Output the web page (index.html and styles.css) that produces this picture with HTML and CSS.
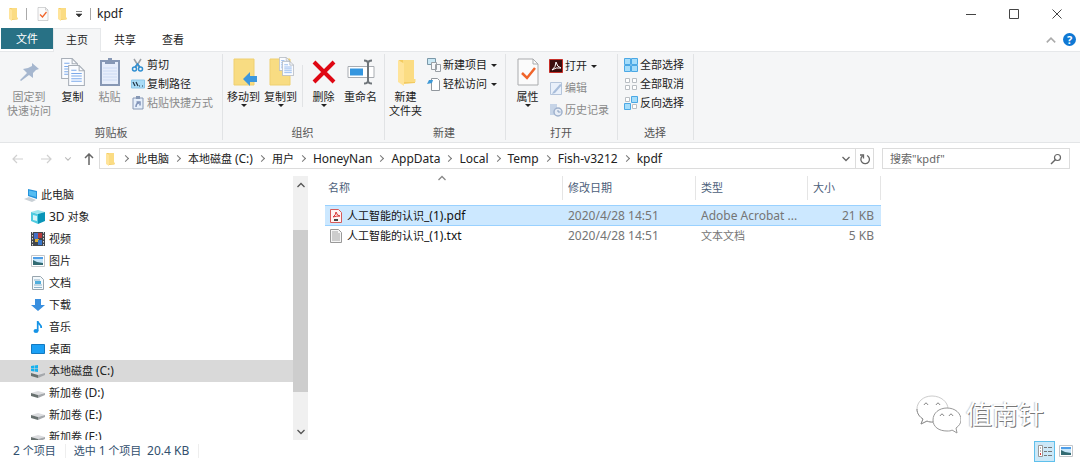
FILE: index.html
```html
<!DOCTYPE html>
<html lang="zh-CN">
<head>
    <meta charset="UTF-8">
    <meta name="viewport" content="width=device-width, initial-scale=1.0">
    <title>kpdf</title>
    <link rel="stylesheet" href="styles.css">
</head>
<body>
    <!-- Shared icons -->
    <svg class="defs" aria-hidden="true">
        <symbol id="folder" viewBox="0 0 20 28">
            <path d="M3 2h14v20h2v3l-12 1z" fill="#f3cb60"/>
            <path d="M7 2h11v19h1.500v3H7z" fill="#fbdc83"/>
            <path d="M2 2l6 3.500V28L2 24z" fill="#ffe49a"/>
        </symbol>
        <symbol id="check-page" viewBox="0 0 22 28">
            <path d="M1 1h15l5 5v21H1z" fill="#fbfbfb" stroke="#a9abad"/>
            <path d="M16 1v5h5" fill="none" stroke="#a9abad"/>
            <path d="M5 15l5 5 8-10" fill="none" stroke="#f0642a" stroke-width="2.500"/>
        </symbol>
        <symbol id="page" viewBox="0 0 16 20">
            <path d="M.5.5h10l5 5v14H.5z" fill="#fafcff" stroke="#a8afb8"/>
            <path d="M10.500.5v5h5" fill="none" stroke="#a8afb8"/>
            <path d="M3 5h5M3 8h10M3 10.500h10M3 13h10M3 15.500h10" stroke="#7ca9ea"/>
        </symbol>
        <symbol id="drive" viewBox="0 0 14 10">
            <path d="M0 5l7-2 7 2-7 2z" fill="#dcdde0"/>
            <path d="M0 5l7 2v3L0 8z" fill="#68716f"/>
            <path d="M7 7l7-2v2l-7 3z" fill="#a5a8ac"/>
        </symbol>
        <symbol id="picture" viewBox="0 0 14 12">
            <path d="M.5.500h13v11H.5z" fill="#fff" stroke="#c3c6ca"/>
            <path d="M2 2h10v8H2z" fill="#c6e6fa"/>
            <path d="M2 2h10v2H2z" fill="#4f9ee8"/>
            <path d="M2 5l4 2 6 1v2H2z" fill="#326b73"/>
        </symbol>
        <symbol id="chevron" viewBox="0 0 10 10">
            <path d="M1.500 3L5 6.500 8.500 3" fill="none" stroke="currentColor" stroke-width="1.300"/>
        </symbol>
    </svg>

    <div class="explorer">
        <header class="titlebar">
            <svg class="title-icon" width="10" height="14"><use href="#folder"/></svg>
            <span class="bar"></span>
            <button class="quick" aria-label="属性"><svg width="12" height="14"><use href="#check-page"/></svg></button>
            <button class="quick" aria-label="新建文件夹"><svg width="10" height="14"><use href="#folder"/></svg></button>
            <button class="quick more" aria-label="自定义快速访问工具栏"><svg width="6" height="7"><path d="M0 .5h6M0 3h6L3 6z" fill="#333" stroke="#333" stroke-width=".6"/></svg></button>
            <span class="bar"></span>
            <span class="title en">kpdf</span>
            <div class="window-buttons">
                <button aria-label="最小化"><svg width="10" height="10"><path d="M0 5.500h10" stroke="#444"/></svg></button>
                <button aria-label="最大化"><svg width="10" height="10"><path d="M.5.500h9v9h-9z" fill="none" stroke="#444"/></svg></button>
                <button aria-label="关闭"><svg width="10" height="10"><path d="M.5.500l9 9M9.500.500l-9 9" stroke="#444"/></svg></button>
            </div>
        </header>

        <nav class="tabs">
            <button class="tab file-tab">文件</button>
            <button class="tab active">主页</button>
            <button class="tab">共享</button>
            <button class="tab">查看</button>
            <div class="tabs-right">
                <button class="collapse" aria-label="折叠功能区"><svg class="up" width="12" height="12"><use href="#chevron"/></svg></button>
                <button class="help" aria-label="帮助">?</button>
            </div>
        </nav>

        <section class="ribbon">
            <div class="group clipboard">
                <div class="tools">
                    <button class="big wide" disabled>
                        <svg width="22" height="30"><path d="M14 6l7 6-3 1-3 3 0 5-4-3-8 6-1-1 7-7-4-4 5-1 4-2z" fill="#a6b7cf"/></svg>
                        <span>固定到<br>快速访问</span>
                    </button>
                    <button class="big">
                        <svg width="24" height="30"><use href="#page" x="0" y="1" width="17" height="21"/><use href="#page" x="7" y="8" width="17" height="21"/></svg>
                        <span>复制</span>
                    </button>
                    <button class="big" disabled>
                        <svg width="22" height="30"><path d="M2 4h18v24H2z" fill="#e7eefb" stroke="#8798b5" stroke-width="2"/><path d="M6 3h3V1h4v2h3v4H6z" fill="#8798b5"/><path d="M4 11h14M4 14h14M4 17h14M4 20h14M4 23h14" stroke="#ccdaf3"/></svg>
                        <span>粘贴</span>
                    </button>
                    <div class="small-list">
                        <button class="small"><svg width="14" height="14"><path d="M3 1l5 8M10 1L5 9" stroke="#9aa0a6" stroke-width="1.500"/><circle cx="3.500" cy="11" r="2" fill="none" stroke="#2f8fd2" stroke-width="1.500"/><circle cx="9.500" cy="11" r="2" fill="none" stroke="#2f8fd2" stroke-width="1.500"/><path d="M4 9l2.500-3L9 9" fill="none" stroke="#2f8fd2" stroke-width="1.500"/></svg>剪切</button>
                        <button class="small"><svg width="14" height="14"><path d="M.5 3h13v8H.5z" fill="#a9dcf7" stroke="#8bc6e8"/><path d="M2 5l2 4M5 5l2 4M8 9h1M11 9h1" stroke="#234" stroke-width="1.200"/></svg>复制路径</button>
                        <button class="small" disabled><svg width="14" height="14"><path d="M2 2h10v11H2z" fill="#e6effb" stroke="#8798b5"/><path d="M5 0h4v3H5z" fill="#8798b5"/><path d="M5 11c0-3 1-4 3-4M5.500 6H9v3.500" fill="none" stroke="#8093b8" stroke-width="1.500"/></svg>粘贴快捷方式</button>
                    </div>
                </div>
                <div class="group-name">剪贴板</div>
            </div>

            <div class="group organize">
                <div class="tools">
                    <button class="big">
                        <svg width="26" height="30"><path d="M3 2h20v26H3z" fill="#f8dc82" stroke="#efd070"/><path d="M12 22l7-7v4h7v6h-7v4z" fill="#3c97dd"/></svg>
                        <span>移动到</span><i class="arrow"></i>
                    </button>
                    <button class="big">
                        <svg width="26" height="30"><path d="M2 2h20v26H2z" fill="#f8dc82" stroke="#efd070"/><use href="#page" x="11" y="0" width="11" height="14"/><use href="#page" x="14" y="4" width="12" height="15"/></svg>
                        <span>复制到</span><i class="arrow"></i>
                    </button>
                    <span class="divider"></span>
                    <button class="big">
                        <svg width="24" height="30"><path d="M2 5l20 20M22 5L2 25" stroke="#df0713" stroke-width="4"/></svg>
                        <span>删除</span><i class="arrow"></i>
                    </button>
                    <button class="big">
                        <svg width="28" height="30"><path d="M1 9.500h26v11H1z" fill="#fff" stroke="#a9adb2"/><path d="M3 11.500h13v7H3z" fill="#3496df"/><path d="M17 3.500q4 0 4 3v17q0 3-4 3M25 3.500q-4 0-4 3v17q0 3 4 3" fill="none" stroke="#6f757a" stroke-width="2"/></svg>
                        <span>重命名</span>
                    </button>
                </div>
                <div class="group-name">组织</div>
            </div>

            <div class="group create">
                <div class="tools">
                    <button class="big">
                        <svg width="20" height="30"><use href="#folder" x="0" y="1" width="20" height="28"/></svg>
                        <span>新建<br>文件夹</span>
                    </button>
                    <div class="small-list">
                        <button class="small"><svg width="14" height="14"><path d="M.5.500h8v6h-8z" fill="#c9e8f5" stroke="#7b98a8"/><path d="M4.500 4.500h5v7h-5zM8.500 6.500h5v7h-5z" fill="#f7f8fa" stroke="#999fa5"/></svg>新建项目<i class="arrow"></i></button>
                        <button class="small"><svg width="14" height="14"><path d="M4.500 1.500h6l2 2v10h-8z" fill="#fff" stroke="#91979d"/><path d="M0 7l2-4 4 0-1 3z" fill="#3d98d5"/></svg>轻松访问<i class="arrow"></i></button>
                    </div>
                </div>
                <div class="group-name">新建</div>
            </div>

            <div class="group open">
                <div class="tools">
                    <button class="big">
                        <svg width="22" height="30"><use href="#check-page" x="0" y="1" width="22" height="28"/></svg>
                        <span>属性</span><i class="arrow"></i>
                    </button>
                    <div class="small-list loose">
                        <button class="small"><svg width="14" height="14"><path d="M.5.500h13v13H.5z" fill="#3b0d0d" stroke="#c72f28"/><path d="M3 11q4-3 4-8 1 5 5 6-5-1-9 2z" fill="none" stroke="#fff"/></svg>打开<i class="arrow"></i></button>
                        <button class="small" disabled><svg width="14" height="14"><path d="M1.500 1.500h11v12h-11z" fill="#e9f0fa" stroke="#b5c5db"/><path d="M4 11l7-8 2 1-7 8-3 1z" fill="#a9bedb"/></svg>编辑</button>
                        <button class="small" disabled><svg width="14" height="14"><path d="M1 1h7v11H1z" fill="#c6d4e7"/><circle cx="9" cy="9" r="4" fill="#e7edf6" stroke="#9fb1cd" stroke-width="1.500"/><path d="M9 7v2h2.500" fill="none" stroke="#879dbd"/></svg>历史记录</button>
                    </div>
                </div>
                <div class="group-name">打开</div>
            </div>

            <div class="group select">
                <div class="tools">
                    <div class="small-list">
                        <button class="small"><svg width="14" height="14"><path d="M.5.500h6v6h-6zM7.500.500h6v6h-6zM.5 7.500h6v6h-6zM7.500 7.500h6v6h-6z" fill="#a5ddfa" stroke="#4ba8e5"/></svg>全部选择</button>
                        <button class="small"><svg width="14" height="14"><path d="M1.500 1.500h4v4h-4zM8.500 1.500h4v4h-4zM1.500 8.500h4v4h-4zM8.500 8.500h4v4h-4z" fill="#fff" stroke="#b9bec3"/></svg>全部取消</button>
                        <button class="small"><svg width="14" height="14"><path d="M1.500 1.500h4v4h-4zM8.500 8.500h4v4h-4z" fill="#fff" stroke="#b9bec3"/><path d="M7.500.500h6v6h-6zM.5 7.500h6v6h-6z" fill="#a5ddfa" stroke="#4ba8e5"/></svg>反向选择</button>
                    </div>
                </div>
                <div class="group-name">选择</div>
            </div>
        </section>

        <div class="address-row">
            <div class="history">
                <button aria-label="后退" disabled><svg width="12" height="12"><path d="M11 6H1M5 2L1 6l4 4" fill="none" stroke="#d0d0d0" stroke-width="1.200"/></svg></button>
                <button aria-label="前进" disabled><svg width="12" height="12"><path d="M1 6h10M7 2l4 4-4 4" fill="none" stroke="#d0d0d0" stroke-width="1.200"/></svg></button>
                <button class="recent" aria-label="最近浏览的位置" disabled><svg width="8" height="8"><use href="#chevron"/></svg></button>
                <button aria-label="上移"><svg width="10" height="12"><path d="M5 12V1M1 5l4-4 4 4" fill="none" stroke="#666" stroke-width="1.500"/></svg></button>
            </div>
            <div class="address">
                <svg width="10" height="14"><use href="#folder"/></svg>
                <nav class="crumbs">
                    <a href="#">此电脑</a>
                    <a href="#">本地磁盘 <span class="en">(C:)</span></a>
                    <a href="#">用户</a>
                    <a href="#" class="en">HoneyNan</a>
                    <a href="#" class="en">AppData</a>
                    <a href="#" class="en">Local</a>
                    <a href="#" class="en">Temp</a>
                    <a href="#" class="en">Fish-v3212</a>
                    <a href="#" class="en">kpdf</a>
                </nav>
                <button class="drop" aria-label="以前的位置"><svg width="10" height="10"><use href="#chevron"/></svg></button>
                <button class="refresh" aria-label="刷新"><svg width="12" height="12"><path d="M8 2.500a4.300 4.300 0 1 1-4.500.500M1 2h3.500v3.500" fill="none" stroke="#666" stroke-width="1.300"/></svg></button>
            </div>
            <div class="search">
                <input type="search" aria-label="搜索" placeholder='搜索"kpdf"'>
                <svg width="12" height="12"><circle cx="7.500" cy="4.500" r="3" fill="none" stroke="#666" stroke-width="1.200"/><path d="M5.500 6.500L1 11" stroke="#666" stroke-width="1.500"/></svg>
            </div>
        </div>

        <main class="content">
            <aside class="sidebar">
                <a href="#" class="node root"><svg width="14" height="14"><path d="M4 1l9 2v8L4 8z" fill="#2593dc"/><path d="M5 2.500l7 1.500v5L5 7z" fill="#55bdf2"/><path d="M0 11l5-2 7 3-4 2z" fill="#c9d0d6"/></svg>此电脑</a>
                <a href="#" class="node"><svg width="14" height="14"><path d="M0 2l7-2 7 2-6 2z" fill="#9ee6ee"/><path d="M0 2l7 2v10l-7-3z" fill="#4fcbe0"/><path d="M7 4l7-2v9l-7 3z" fill="#0995b8"/><path d="M2 5l4 1v5l-4-1z" fill="#d7f4f7"/></svg><span><span class="en">3D</span> 对象</span></a>
                <a href="#" class="node"><svg width="14" height="14"><path d="M0 0h14v14H0z" fill="#41464c"/><path d="M1.500 0v14M12.500 0v14" stroke="#ddd" stroke-dasharray="1.500 1.500"/><path d="M3 1h4v6H3z" fill="#456fc4"/><path d="M7 1h4v5H7z" fill="#b53c3c"/><path d="M4 7h4v3H4z" fill="#dcae35"/><path d="M7 8h4v5H7z" fill="#3978cb"/></svg>视频</a>
                <a href="#" class="node"><svg width="14" height="12"><use href="#picture"/></svg>图片</a>
                <a href="#" class="node"><svg width="14" height="14"><path d="M1.500.500h8l3 3v10h-11z" fill="#f4f9fc" stroke="#98a5ae"/><path d="M3 4h6M3 9h8M3 11.500h8" stroke="#8fb3ca"/><path d="M4 5h6v3H4z" fill="#51aedc"/></svg>文档</a>
                <a href="#" class="node"><svg width="14" height="14"><path d="M4 1h6v6h4l-7 6-7-6h4z" fill="#398fdf"/></svg>下载</a>
                <a href="#" class="node"><svg width="14" height="14"><ellipse cx="5" cy="11" rx="2.500" ry="2" fill="#1593e6"/><path d="M6.700 11V1c0 3 4 3 3.500 7" fill="none" stroke="#1593e6" stroke-width="1.700"/></svg>音乐</a>
                <a href="#" class="node"><svg width="14" height="12"><path d="M.5 1.500h13v9H.5z" fill="#1ba0f5" stroke="#1479c0"/></svg>桌面</a>
                <a href="#" class="node current"><svg width="14" height="14"><use href="#drive" y="4" width="14" height="10"/><path d="M0 2l3-.5V4H0zM3.500 1.500L7 1v3H3.500zM0 4.500h3v3L0 7zM3.500 4.500H7V8l-3.500-.5z" fill="#17b1ee"/></svg><span>本地磁盘 <span class="en">(C:)</span></span></a>
                <a href="#" class="node"><svg width="14" height="10"><use href="#drive"/></svg><span>新加卷 <span class="en">(D:)</span></span></a>
                <a href="#" class="node"><svg width="14" height="10"><use href="#drive"/></svg><span>新加卷 <span class="en">(E:)</span></span></a>
                <a href="#" class="node"><svg width="14" height="10"><use href="#drive"/></svg><span>新加卷 <span class="en">(F:)</span></span></a>
            </aside>
            <div class="scrollbar">
                <button aria-label="向上滚动"><svg class="up" width="10" height="10"><use href="#chevron"/></svg></button>
                <div class="track"><div class="thumb"></div></div>
                <button aria-label="向下滚动"><svg width="10" height="10"><use href="#chevron"/></svg></button>
            </div>
            <section class="files">
                <table>
                    <thead>
                        <tr>
                            <th class="name">名称<svg class="sort up" width="10" height="10"><use href="#chevron"/></svg></th>
                            <th class="date">修改日期</th>
                            <th class="type">类型</th>
                            <th class="size">大小</th>
                        </tr>
                    </thead>
                    <tbody>
                        <tr class="selected">
                            <td class="name"><svg width="12" height="14"><path d="M.5.500h8l3 3v10H.5z" fill="#fff3f3" stroke="#d65a5a"/><path d="M3 8q3-2 3-5 1 4 4 4-4 0-7 1z" fill="none" stroke="#d93636"/><path d="M4 11h4" stroke="#444" stroke-width="2"/></svg>人工智能的认识<span class="en">_(1).pdf</span></td>
                            <td class="en">2020/4/28 14:51</td>
                            <td class="en">Adobe Acrobat ...</td>
                            <td class="size en">21 KB</td>
                        </tr>
                        <tr>
                            <td class="name"><svg width="12" height="14"><path d="M.5.500h8l3 3v10H.5z" fill="#f5f5f5" stroke="#999"/><path d="M2 3h6M2 5h8M2 7h8M2 9h8M2 11h8" stroke="#a5a5a5"/></svg>人工智能的认识<span class="en">_(1).txt</span></td>
                            <td class="en">2020/4/28 14:51</td>
                            <td>文本文档</td>
                            <td class="size en">5 KB</td>
                        </tr>
                    </tbody>
                </table>
            </section>
        </main>

        <footer class="status">
            <span class="count"><span class="en">2</span> 个项目</span>
            <span class="picked">选中 <span class="en">1</span> 个项目&nbsp; <span class="en">20.4 KB</span></span>
            <div class="views">
                <button class="on" aria-label="详细信息"><svg width="14" height="14"><path d="M.5 1.500h4v11h-4z" fill="#fff" stroke="#999"/><path d="M2 4h1M2 7h1" stroke="#666"/><path d="M2 10h1" stroke="#d33" stroke-width="2"/><path d="M6 3.500h3M10 3.500h4M6 7.500h3M10 7.500h4M6 11.500h3M10 11.500h4" stroke="#777"/></svg></button>
                <button aria-label="大缩略图"><svg width="14" height="12"><use href="#picture"/></svg></button>
            </div>
        </footer>

        <!-- Account signature over the lower right corner -->
        <div class="signature">
            <svg width="46" height="40" fill="#fff">
                <path d="M17 2C8 2 2 8 2 15c0 5 3 8 6 10l-2 5 6-3c2 1 4 1 6 1 9 0 15-6 15-13S26 2 17 2z" stroke="#ccc"/>
                <path d="M2 15c0 5 3 8 6 10l-2 5 6-3c2 1 4 1 6 1" stroke="#888"/>
                <path d="M32 14c-8 0-14 5-14 12s6 11 14 11c2 0 4 0 5-1l5 3-1-5c3-2 5-5 5-8 0-7-6-12-14-12z" stroke="#999"/>
                <path d="M9 11q2-4 4 0M21 11q2-4 4 0M25 22q2-4 4 0M34 22q2-4 4 0" fill="none" stroke="#888"/>
            </svg>
            <span>值南针</span>
        </div>
    </div>
</body>
</html>
```
FILE: styles.css
```css
/* File explorer window */
* {
    box-sizing: border-box;
}

body {
    margin: 0;
    font-family: "Noto Sans", "Noto Sans CJK SC", sans-serif;
    font-size: 11px;
    line-height: 14px;
    color: #222;
    background-color: #fff;
}

button {
    padding: 0;
    border: none;
    background: none;
    font: inherit;
    color: inherit;
    display: flex;
    align-items: center;
    justify-content: center;
}

a {
    color: inherit;
    text-decoration: none;
}

svg {
    flex-shrink: 0;
}

.defs {
    display: none;
}

.en {
    font-size: 12px;
}

.up {
    transform: rotate(180deg);
}

.explorer {
    position: relative;
    display: flex;
    flex-direction: column;
    height: 100vh;
}

/* Title bar */
.titlebar {
    display: flex;
    align-items: center;
    height: 28px;
    padding: 0 2px 0 8px;
}

.bar {
    width: 1px;
    height: 12px;
    margin: 0 6px 0 8px;
    background-color: #aaa;
}

.quick {
    margin: 0 4px;
}

.more {
    margin: 0 0 0 5px;
}

.window-buttons {
    display: flex;
    margin-left: auto;
}

.window-buttons button {
    width: 43px;
    height: 28px;
}

/* Tabs */
.tabs {
    display: flex;
    height: 24px;
    padding-left: 1px;
    border-bottom: 1px solid #e6e8ea;
}

.tab {
    width: 48px;
}

.file-tab {
    width: 52px;
    height: 21px;
    color: #fff;
    background-color: #287185;
}

.tab.active {
    height: 24px;
    padding-bottom: 2px;
    background-color: #f5f6f7;
    border: 1px solid #e6e8ea;
    border-bottom: none;
}

.tabs-right {
    display: flex;
    align-items: center;
    gap: 6px;
    margin-left: auto;
    padding-right: 4px;
}

.collapse {
    color: #aaa;
}

.help {
    width: 13px;
    height: 13px;
    border-radius: 50%;
    color: #fff;
    font-weight: bold;
    background-color: #0f78d4;
}

/* Ribbon */
.ribbon {
    display: flex;
    height: 91px;
    padding: 2px 0;
    background-color: #f5f6f7;
    border-bottom: 1px solid #e3e5e7;
}

.group {
    display: flex;
    flex-direction: column;
    justify-content: space-between;
    padding: 3px 4px 0;
    border-right: 1px solid #e1e3e5;
}

.tools {
    display: flex;
}

.group-name {
    text-align: center;
    color: #555;
}

.big {
    flex-direction: column;
    justify-content: flex-start;
    width: 37px;
    white-space: nowrap;
}

.big span {
    margin-top: 3px;
}

.big.wide {
    width: 50px;
}

button:disabled {
    color: #8a8a8a;
}

.small-list {
    display: flex;
    flex-direction: column;
    align-items: flex-start;
    gap: 5px;
    padding: 1px 0 0 3px;
    white-space: nowrap;
}

.small-list.loose {
    gap: 8px;
    padding-top: 2px;
}

.small {
    gap: 2px;
}

.arrow {
    border: 3px solid transparent;
    border-top-color: #222;
    border-bottom: none;
}

.small .arrow {
    margin-left: 2px;
}

.divider {
    width: 1px;
    height: 42px;
    margin: 8px 2px 0 3px;
    background-color: #e1e3e5;
}

.clipboard {
    width: 223px;
}

.organize {
    width: 162px;
    padding-left: 2px;
}

.create {
    width: 121px;
    padding-left: 2px;
}

.open {
    width: 112px;
    padding-left: 3px;
}

.select {
    width: 76px;
    padding-left: 3px;
}

/* Address row */
.address-row {
    display: flex;
    height: 33px;
    padding: 5px 10px 7px 12px;
}

.history {
    display: flex;
    align-items: center;
    width: 87px;
    gap: 16px;
}

.history .recent {
    margin: 0 -4px;
    color: #bbb;
}

.address {
    display: flex;
    flex: 1;
    align-items: center;
    padding-left: 5px;
    border: 1px solid #dcdcdc;
}

.crumbs {
    display: flex;
    flex: 1;
    margin-left: 2px;
    white-space: nowrap;
}

.crumbs a {
    display: flex;
    align-items: center;
    white-space: pre;
}

.crumbs a::before {
    content: "";
    width: 4px;
    height: 4px;
    margin: 0 8px 0 6px;
    border: solid #777;
    border-width: 1px 1px 0 0;
    transform: rotate(45deg);
}

.drop {
    width: 18px;
    height: 19px;
    color: #666;
}

.refresh {
    width: 18px;
    height: 19px;
    border-left: 1px solid #dcdcdc;
}

.search {
    display: flex;
    align-items: center;
    width: 188px;
    margin-left: 8px;
    padding: 0 7px;
    border: 1px solid #dcdcdc;
}

.search input {
    flex: 1;
    min-width: 0;
    padding: 0;
    border: none;
    outline: none;
    font: inherit;
    background: none;
}

.search input::placeholder {
    color: #666;
}

/* Navigation pane */
.content {
    display: flex;
    flex: 1;
    min-height: 0;
}

.sidebar {
    width: 293px;
    padding-top: 8px;
    overflow: hidden;
}

.node {
    display: flex;
    align-items: center;
    gap: 4px;
    height: 22px;
    padding-left: 31px;
}

.node.root {
    gap: 3px;
    padding-left: 24px;
}

.node.current {
    background-color: #d9d9d9;
}

.scrollbar {
    display: flex;
    flex-direction: column;
    width: 15px;
    background-color: #f0f0f0;
}

.scrollbar button {
    width: 15px;
    height: 17px;
    color: #555;
}

.track {
    display: flex;
    flex: 1;
    align-items: center;
    padding-top: 5px;
}

.thumb {
    width: 15px;
    height: 72%;
    background-color: #cdcdcd;
}

/* File list */
.files {
    flex: 1;
    padding-left: 17px;
}

table {
    width: 556px;
    table-layout: fixed;
    border-collapse: separate;
    border-spacing: 0;
}

th {
    position: relative;
    height: 24px;
    padding: 0 5px;
    font-weight: normal;
    text-align: left;
    color: #4c607a;
    border-right: 1px solid #e5e5e5;
}

.sort {
    position: absolute;
    top: -3px;
    left: calc(50% - 7px);
    color: #888;
}

th.name {
    width: 238px;
    padding-left: 3px;
}

th.date {
    width: 133px;
}

th.type {
    width: 112px;
}

td {
    height: 20px;
    padding: 0 5px;
    color: #757575;
    white-space: nowrap;
}

td.name {
    color: #111;
}

td svg {
    margin-right: 5px;
    vertical-align: -3px;
}

td.size {
    padding-right: 7px;
    text-align: right;
}

tbody::before {
    content: "";
    display: block;
    height: 5px;
}

.selected td {
    height: 21px;
    background-color: #cce8ff;
    border: solid #99d1ff;
    border-width: 1px 0;
}

/* Status bar */
.status {
    display: flex;
    align-items: center;
    height: 22px;
    padding: 0 4px 0 13px;
    color: #33506e;
}

.count,
.picked {
    padding-right: 9px;
    border-right: 1px solid #eee;
}

.picked {
    margin-left: 8px;
}

.views {
    display: flex;
    margin-left: auto;
}

.views button {
    width: 21px;
    height: 21px;
}

.views .on {
    background-color: #cbe8f8;
    border: 1px solid #5fc0ec;
}

/* Signature */
.signature {
    position: absolute;
    right: 36px;
    bottom: 28px;
    display: flex;
    align-items: center;
    gap: 5px;
    font-size: 26px;
    line-height: 40px;
    color: #fff;
    text-shadow: 1px 1px 0 #777, -1px 0 1px #ccc;
}
```
